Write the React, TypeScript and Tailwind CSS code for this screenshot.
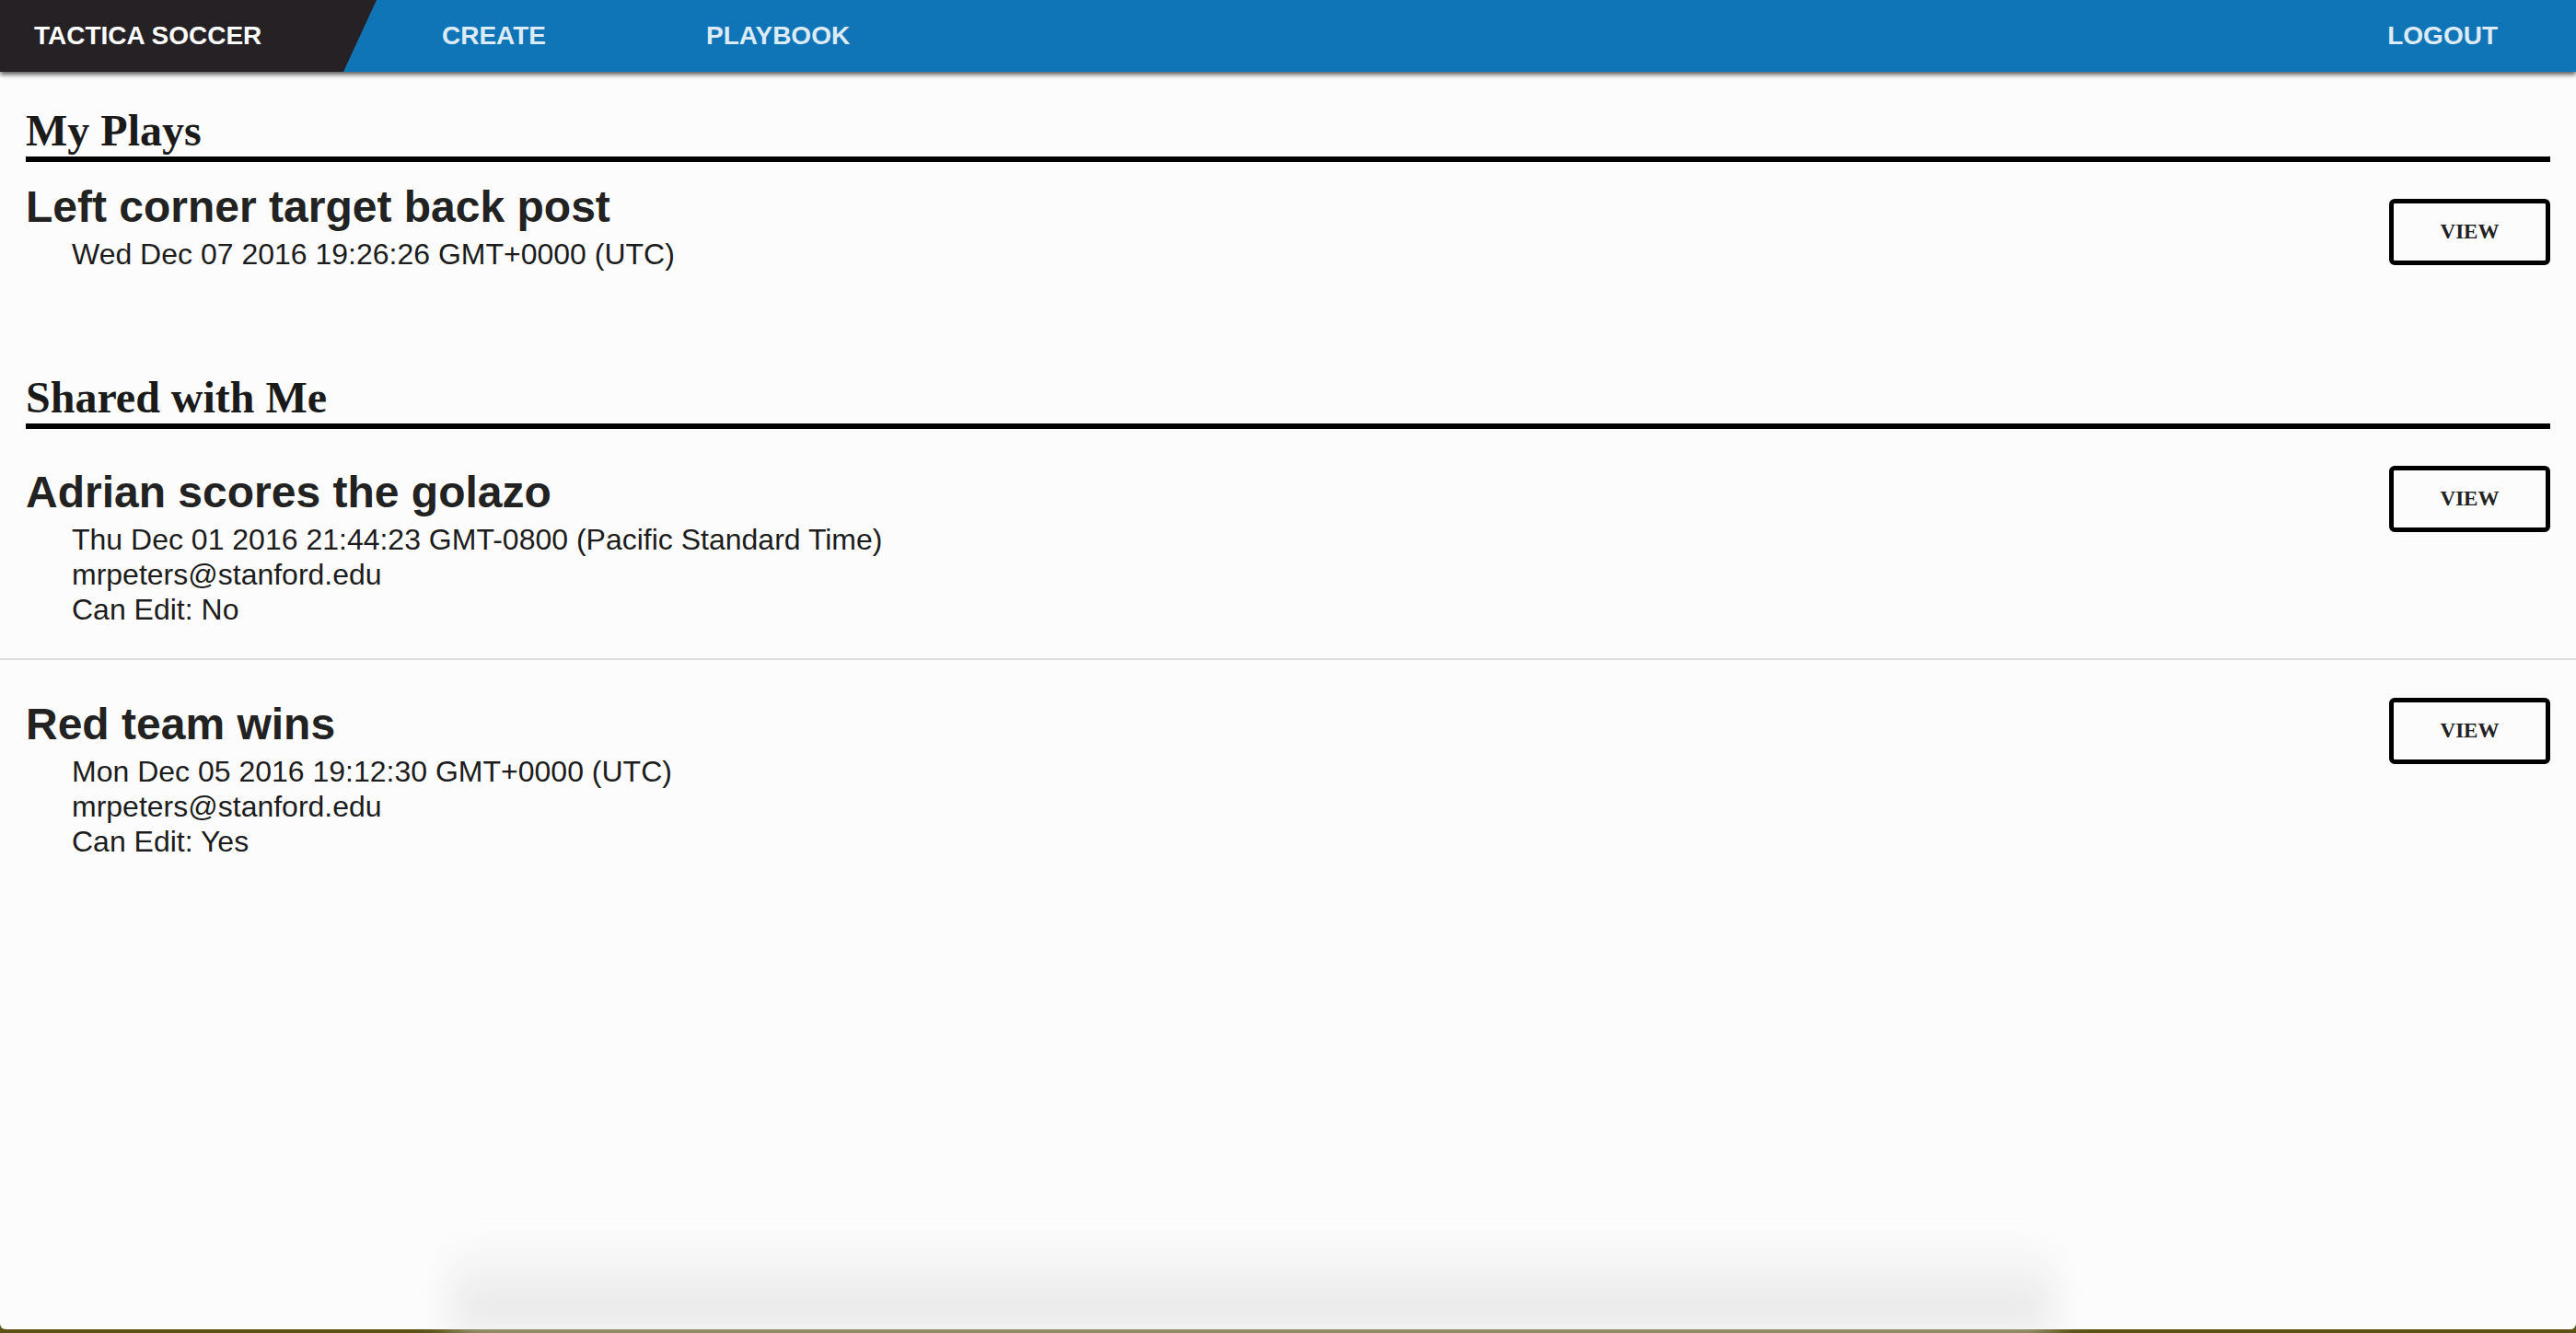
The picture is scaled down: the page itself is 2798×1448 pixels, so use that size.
import React from 'react';

type Play = {
  title: string;
  date: string;
  owner?: string;
  canEdit?: string;
};

const myPlays: Play[] = [{ title: 'Left corner target back post', date: 'Wed Dec 07 2016 19:26:26 GMT+0000 (UTC)' }];

const sharedPlays: Play[] = [
  {
    title: 'Adrian scores the golazo',
    date: 'Thu Dec 01 2016 21:44:23 GMT-0800 (Pacific Standard Time)',
    owner: 'mrpeters@stanford.edu',
    canEdit: 'No',
  },
  {
    title: 'Red team wins',
    date: 'Mon Dec 05 2016 19:12:30 GMT+0000 (UTC)',
    owner: 'mrpeters@stanford.edu',
    canEdit: 'Yes',
  },
];

const ViewButton = ({ className }: { className: string }) => (
  <button
    className={`w-[175px] h-[72px] shrink-0 border-[5px] border-black rounded-[6px] bg-transparent text-[23px] font-bold text-[#222] font-['Liberation_Serif',serif] ${className}`}
  >
    VIEW
  </button>
);

const PlayDetails = ({ play }: { play: Play }) => (
  <div className="min-w-0">
    <h3 className="text-[48px] leading-[56px] font-bold text-[#222]">{play.title}</h3>
    <div className="mt-[4px] pl-[50px] text-[32px] leading-[38px] text-[#1c1c1c]">
      <div>{play.date}</div>
      {play.owner && <div>{play.owner}</div>}
      {play.canEdit && <div>Can Edit: {play.canEdit}</div>}
    </div>
  </div>
);

const SectionTitle = ({ children, className }: { children: React.ReactNode; className: string }) => (
  <h2
    className={`text-[48px] leading-[56px] font-bold text-[#1a1a1a] border-b-[6px] border-black font-['Liberation_Serif','Times_New_Roman',serif] ${className}`}
  >
    {children}
  </h2>
);

export default function App() {
  return (
    <div className="relative min-h-[1448px] flex flex-col bg-[#5b5116] font-['Liberation_Sans',Arial,sans-serif]">
      <div className="flex-1 flex flex-col bg-[#fcfcfc] rounded-b-[6px] overflow-hidden">
        {/* navbar */}
        <nav className="relative z-10 h-[78px] flex items-center bg-[#1075b7] shadow-[0_3px_5px_rgba(0,0,0,0.65)]">
          <div className="h-full w-[409px] flex items-center pl-[37px] bg-[#252125] [clip-path:polygon(0_0,100%_0,calc(100%-36px)_100%,0_100%)]">
            <span className="text-[28px] font-bold text-white">TACTICA SOCCER</span>
          </div>
          <a className="ml-[71px] text-[28px] font-bold text-[#dcebf6]">CREATE</a>
          <a className="ml-[174px] text-[28px] font-bold text-[#dcebf6]">PLAYBOOK</a>
          <a className="ml-auto mr-[85px] text-[28px] font-bold text-[#dcebf6]">LOGOUT</a>
        </nav>

        <main className="flex-1 px-[28px]">
          <SectionTitle className="mt-[36px]">My Plays</SectionTitle>
          {myPlays.map((play) => (
            <div key={play.title} className="pt-[21px] flex justify-between items-start">
              <PlayDetails play={play} />
              <ViewButton className="mt-[19px]" />
            </div>
          ))}

          <SectionTitle className="mt-[109px]">Shared with Me</SectionTitle>
          {sharedPlays.map((play, i) => (
            <div
              key={play.title}
              className={`-mx-[28px] px-[28px] flex justify-between items-start ${
                i === 0 ? 'pt-[41px] pb-[34px] border-b-2 border-[#dedede]' : 'pt-[42px]'
              }`}
            >
              <PlayDetails play={play} />
              <ViewButton className="-mt-px" />
            </div>
          ))}
        </main>

        {/* dock shadow */}
        <div className="pointer-events-none absolute bottom-[4px] left-[490px] w-[1740px] h-[100px] bg-linear-to-b from-transparent to-[#e4e4e4] blur-[18px]" />
      </div>
      <div className="h-[4px] shrink-0" />
    </div>
  );
}
